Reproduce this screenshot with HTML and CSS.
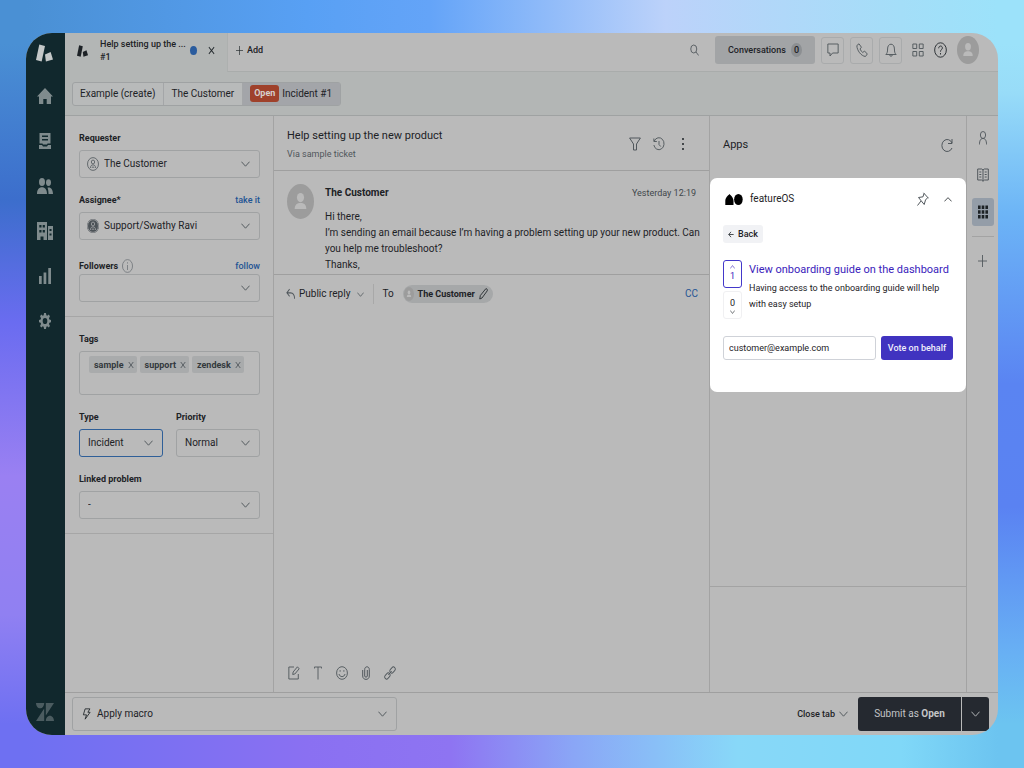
FILE: index.html
```html
<!DOCTYPE html>
<html lang="en">
<head>
<meta charset="UTF-8">
<meta name="viewport" content="width=device-width, initial-scale=1.0">
<title>Help setting up the new product</title>
<link rel="stylesheet" href="styles.css">
</head>
<body>
<svg class="sprite" aria-hidden="true">
    <symbol id="chevron" viewBox="0 0 10 6" preserveAspectRatio="none"><path d="M.5.7 5 5.2 9.5.7"/></symbol>
    <symbol id="logo" viewBox="0 0 18 18" preserveAspectRatio="none"><path d="M3.500.5 9.500 2 6 17.500 0 16z"/><path d="M9.500 10.500 15.500 8l2.500 7.500-7.500 2z"/></symbol>
    <symbol id="home" viewBox="0 0 16 16" preserveAspectRatio="none"><path d="M8 0l8 8.500h-2V16H9.700v-5H6.300v5H2V8.500H0z"/></symbol>
    <symbol id="views" viewBox="0 0 12 16" preserveAspectRatio="none"><path fill-rule="evenodd" d="M.5 0h11v10.500H8.500l-.5 1H4l-.5-1h-3zM3 2.500V4h6V2.500zM3 6v1.500h6V6zM0 12h3l1 1.500h4l1-1.500h3v4H0z"/></symbol>
    <symbol id="people" viewBox="0 0 16 14" preserveAspectRatio="none"><ellipse cx="5" cy="3.500" rx="3" ry="3.500"/><ellipse cx="11.500" cy="4" rx="2.500" ry="3"/><path d="M0 14c0-4 2-6 5-6s5 2 5 6zM10.500 8.500c3-1 5.500 1.500 5.500 5.500h-4.500c0-2.500-.3-4-1-5.500z"/></symbol>
    <symbol id="building" viewBox="0 0 16 18" preserveAspectRatio="none"><path fill-rule="evenodd" d="M0 0h10v18H6.500v-3.500h-3V18H0zM2.300 3v2.500H4.500V3zm3.400 0v2.500h2.200V3zM2.300 8v2.500h2.200V8zm3.400 0v2.500h2.200V8zM11 4h5v14h-5zm1.500 3v2h2V7zm0 4.500v2h2v-2z"/></symbol>
    <symbol id="bars" viewBox="0 0 11 14" preserveAspectRatio="none"><path d="M0 7h2.500v7H0zM4.200 4h2.500v10H4.200zM8.500 0H11v14H8.500z"/></symbol>
    <symbol id="gear" viewBox="0 0 16 16" preserveAspectRatio="none"><path fill-rule="evenodd" d="M6.700 0h2.600l.5 2.300 1.200.5 2-1.300 1.600 1.700-1.300 2 .5 1.300 2.200.4v2.300l-2.200.5-.5 1.200 1.300 2-1.700 1.700-1.900-1.300-1.200.5-.5 2.200H6.700l-.5-2.200-1.200-.5-2 1.300-1.600-1.700 1.300-2-.5-1.200L0 9.200V6.900l2.200-.4.5-1.300-1.300-2L3 1.500l2 1.300 1.200-.5zM8 4.900a3.100 3.100 0 100 6.200 3.100 3.100 0 000-6.200z"/></symbol>
    <symbol id="zendesk" viewBox="0 0 18 18" preserveAspectRatio="none"><path d="M0 0h8.200c0 3-1.800 5.300-4.100 5.300S0 3 0 0zM8.200 5.500V18H0zM9.800 0H18L9.800 12.500zM9.800 18c0-3 1.800-5.300 4.100-5.300S18 15 18 18z"/></symbol>
    <symbol id="close" viewBox="0 0 8 8" preserveAspectRatio="none"><path d="M1 1l6 6M7 1L1 7"/></symbol>
    <symbol id="plus" viewBox="0 0 12 12" preserveAspectRatio="none"><path d="M6 0v12M0 6h12"/></symbol>
    <symbol id="search" viewBox="0 0 12 12" preserveAspectRatio="none"><circle cx="5" cy="5" r="4"/><path d="M8 8l3.500 3.500"/></symbol>
    <symbol id="chat" viewBox="0 0 14 14" preserveAspectRatio="none"><path d="M1 1h12v9H6.500L3.500 13v-3H1z"/></symbol>
    <symbol id="phone" viewBox="0 0 14 14" preserveAspectRatio="none"><path d="M3.500.8L1 2.500c0 5 5 10.500 10 11l2.200-2.500-3.300-3-2 1.500C6.500 8.700 5.300 7.300 4.700 6l1.600-1.800z"/></symbol>
    <symbol id="bell" viewBox="0 0 14 14" preserveAspectRatio="none"><path d="M1 11.500c1.500-1.200 2-2.500 2-5.500 0-3 1.700-4.800 4-4.800S11 3 11 6c0 3 .5 4.300 2 5.500zM5.500 12c.3 1.800 2.700 1.800 3 0"/></symbol>
    <symbol id="tiles" viewBox="0 0 14 14" preserveAspectRatio="none"><path d="M1 1h4.500v4.500H1zM8.500 1H13v4.500H8.500zM1 8.500h4.500V13H1zM8.500 8.500H13V13H8.500z"/></symbol>
    <symbol id="help" viewBox="0 0 16 16" preserveAspectRatio="none"><circle cx="8" cy="8" r="7.200"/><path d="M5.800 6.300c0-3 4.500-3 4.500-.3C10.300 7.600 8 7.600 8 9.700M8 11v1.500"/></symbol>
    <symbol id="avatar" viewBox="0 0 28 28" preserveAspectRatio="none"><circle cx="14" cy="14" r="14"/><circle class="figure" cx="14" cy="10.800" r="3.700"/><path class="figure" d="M8 20c0-3.500 2.500-4.800 6-4.800s6 1.300 6 4.800z"/></symbol>
    <symbol id="person" viewBox="0 0 16 16" preserveAspectRatio="none"><circle cx="8" cy="8" r="7.300"/><circle cx="8" cy="5.700" r="2.200"/><path d="M4.500 12.500c.3-2.500 1.500-3.500 3.500-3.500s3.200 1 3.500 3.500M6.500 12.500L8 11l1.500 1.500"/></symbol>
    <symbol id="info" viewBox="0 0 14 14" preserveAspectRatio="none"><circle cx="7" cy="7" r="6.400"/><path d="M7 6v5M7 3.300v1.200"/></symbol>
    <symbol id="filter" viewBox="0 0 12 14" preserveAspectRatio="none"><path d="M.6 1h10.800L7.500 7v6h-3V7z"/></symbol>
    <symbol id="history" viewBox="0 0 14 14" preserveAspectRatio="none"><path d="M1.500 4A6 6 0 111 8M1 1.500V4.500h3.500M7 4v3.500L9 9.500"/></symbol>
    <symbol id="dots" viewBox="0 0 4 14"><circle cx="2" cy="2" r="1"/><circle cx="2" cy="7" r="1"/><circle cx="2" cy="12" r="1"/></symbol>
    <symbol id="reply" viewBox="0 0 10 10" preserveAspectRatio="none"><path d="M4 1L1 4l3 3M1 4h4c3 0 4.500 2 4.500 5"/></symbol>
    <symbol id="pencil" viewBox="0 0 12 12" preserveAspectRatio="none"><path d="M1 11l.8-3.500L9 .8c1.500-.5 2.500.8 2 2L4 10z"/></symbol>
    <symbol id="compose" viewBox="0 0 14 14" preserveAspectRatio="none"><path d="M7 1H1v12h11V8M5.500 8.500l.5-2.500L11 .8l2 2-5 5.200z"/></symbol>
    <symbol id="text" viewBox="0 0 10 14" preserveAspectRatio="none"><path d="M.5 2.500V1h9v1.500M5 1v12.500"/></symbol>
    <symbol id="smile" viewBox="0 0 14 14" preserveAspectRatio="none"><circle cx="7" cy="7" r="6.300"/><path d="M3.500 8c.8 3.500 6.200 3.500 7 0M4.800 4.200v1.500M9.200 4.200v1.500"/></symbol>
    <symbol id="clip" viewBox="0 0 8 14" preserveAspectRatio="none"><path d="M5.300 4v6c0 1.500-2.600 1.500-2.600 0V3.500c0-3.600 4.600-3.600 4.600 0V10c0 4.500-6.600 4.500-6.600 0V4"/></symbol>
    <symbol id="link" viewBox="0 0 14 14" preserveAspectRatio="none"><rect x="-3.500" y="-2.200" width="7" height="4.400" rx="2.200" transform="translate(10 4) rotate(-45)"/><rect x="-3.500" y="-2.200" width="7" height="4.400" rx="2.200" transform="translate(4 10) rotate(-45)"/><path d="M5 9l4-4"/></symbol>
    <symbol id="refresh" viewBox="0 0 12 14" preserveAspectRatio="none"><path d="M11 1v4.500H7M11 5A5.300 6 0 1011 10"/></symbol>
    <symbol id="user" viewBox="0 0 10 14" preserveAspectRatio="none"><ellipse cx="5" cy="4" rx="3.300" ry="3.500"/><path d="M.5 13.500C.7 9.500 2 7.500 5 7.500s4.300 2 4.500 6"/></symbol>
    <symbol id="book" viewBox="0 0 12 14" preserveAspectRatio="none"><path d="M.7 1h4L6 2l1.300-1h4v11H7.500L6 13.300 4.500 12H.7zM6 2v11M2.300 4h2M2.300 6.500h2M2.300 9h2M7.700 4h2M7.700 6.500h2M7.700 9h2"/></symbol>
    <symbol id="apps" viewBox="0 0 12 14" preserveAspectRatio="none"><path d="M1 .5h2.600v3.400H1zM4.700.5h2.600v3.400H4.700zM8.400.5H11v3.400H8.400zM1 5.300h2.600v3.400H1zM4.700 5.300h2.600v3.400H4.700zM8.400 5.300H11v3.400H8.400zM1 10.100h2.600v3.400H1zM4.700 10.100h2.600v3.400H4.700zM8.400 10.100H11v3.400H8.400z"/></symbol>
    <symbol id="pin" viewBox="0 0 12 14" preserveAspectRatio="none"><path d="M6.500.8l5 5.500M7 1.500L6 4.800 1.500 5.500l5.700 7L8.500 8l2.300-2.500M4 9l-3.500 4.500"/></symbol>
    <symbol id="bolt" viewBox="0 0 10 14" preserveAspectRatio="none"><path d="M3.500 1h5.300L6.500 5H9l-5.500 8L5 8H1.500z"/></symbol>
    <symbol id="featureos" viewBox="0 0 18 11" preserveAspectRatio="none"><path d="M4.500 0c1.500 1.800 4 3.500 4 7v4H.3V7C.3 3.500 3 1.800 4.500 0z"/><ellipse cx="13.400" cy="5.500" rx="4.300" ry="5.500"/></symbol>
    <symbol id="back" viewBox="0 0 8 8" preserveAspectRatio="none"><path d="M7.500 4H1M4 1L1 4l3 3"/></symbol>
</svg>

<div class="window">
    <nav class="sidebar">
        <a href="#" class="brand" aria-label="Agent workspace"><svg class="solid logo"><use href="#logo"/></svg></a>
        <a href="#" aria-label="Home"><svg class="solid nav-icon"><use href="#home"/></svg></a>
        <a href="#" aria-label="Views"><svg class="solid nav-icon small"><use href="#views"/></svg></a>
        <a href="#" aria-label="Customers"><svg class="solid nav-icon"><use href="#people"/></svg></a>
        <a href="#" aria-label="Organizations"><svg class="solid nav-icon tall"><use href="#building"/></svg></a>
        <a href="#" aria-label="Reporting"><svg class="solid nav-icon small"><use href="#bars"/></svg></a>
        <a href="#" aria-label="Admin"><svg class="solid nav-icon small"><use href="#gear"/></svg></a>
        <svg class="solid zendesk"><use href="#zendesk"/></svg>
    </nav>

    <div class="workspace">
        <header class="topbar">
            <div class="tab">
                <svg class="solid tab-logo"><use href="#logo"/></svg>
                <div class="tab-title">Help setting up the ...<br>#1</div>
                <span class="dot"></span>
                <button class="plain" aria-label="Close"><svg class="line dark tiny"><use href="#close"/></svg></button>
            </div>
            <div class="top-tools">
                <button class="plain add"><svg class="line dark tiny"><use href="#plus"/></svg>Add</button>
                <button class="plain search" aria-label="Search"><svg class="line small-icon"><use href="#search"/></svg></button>
                <button class="conversations">Conversations <span class="count">0</span></button>
                <button class="boxed" aria-label="Chat"><svg class="line icon"><use href="#chat"/></svg></button>
                <button class="boxed" aria-label="Phone"><svg class="line icon"><use href="#phone"/></svg></button>
                <button class="boxed" aria-label="Notifications"><svg class="line icon"><use href="#bell"/></svg></button>
                <button class="plain products" aria-label="Products"><svg class="line icon"><use href="#tiles"/></svg></button>
                <button class="plain" aria-label="Help"><svg class="line dark help"><use href="#help"/></svg></button>
                <button class="plain" aria-label="Profile"><svg class="avatar profile"><use href="#avatar"/></svg></button>
            </div>
        </header>

        <div class="crumb-bar">
            <nav class="crumbs">
                <a href="#">Example (create)</a>
                <a href="#">The Customer</a>
                <a href="#" class="current"><span class="badge">Open</span>Incident #1</a>
            </nav>
        </div>

        <main class="main">
            <form class="properties">
                <section>
                    <div class="field">
                        <div class="label-row"><label for="requester">Requester</label></div>
                        <div class="select with-icon">
                            <select id="requester"><option>The Customer</option></select>
                            <svg class="line person"><use href="#person"/></svg>
                            <svg class="line chevron"><use href="#chevron"/></svg>
                        </div>
                    </div>
                    <div class="field">
                        <div class="label-row"><label for="assignee">Assignee*</label><a href="#">take it</a></div>
                        <div class="select with-icon">
                            <select id="assignee"><option>Support/Swathy Ravi</option></select>
                            <svg class="line person filled"><use href="#person"/></svg>
                            <svg class="line chevron"><use href="#chevron"/></svg>
                        </div>
                    </div>
                    <div class="field followers">
                        <div class="label-row"><label for="followers">Followers</label><svg class="line info"><use href="#info"/></svg><a href="#">follow</a></div>
                        <div class="select">
                            <select id="followers"><option></option></select>
                            <svg class="line chevron"><use href="#chevron"/></svg>
                        </div>
                    </div>
                </section>
                <section>
                    <div class="field">
                        <div class="label-row"><span>Tags</span></div>
                        <div class="tags">
                            <span class="tag">sample<svg class="line"><use href="#close"/></svg></span>
                            <span class="tag">support<svg class="line"><use href="#close"/></svg></span>
                            <span class="tag">zendesk<svg class="line"><use href="#close"/></svg></span>
                        </div>
                    </div>
                    <div class="pair">
                        <div class="field">
                            <div class="label-row"><label for="type">Type</label></div>
                            <div class="select focused">
                                <select id="type"><option>Incident</option></select>
                                <svg class="line chevron"><use href="#chevron"/></svg>
                            </div>
                        </div>
                        <div class="field">
                            <div class="label-row"><label for="priority">Priority</label></div>
                            <div class="select">
                                <select id="priority"><option>Normal</option></select>
                                <svg class="line chevron"><use href="#chevron"/></svg>
                            </div>
                        </div>
                    </div>
                    <div class="field">
                        <div class="label-row"><label for="linked">Linked problem</label></div>
                        <div class="select">
                            <select id="linked"><option>-</option></select>
                            <svg class="line chevron"><use href="#chevron"/></svg>
                        </div>
                    </div>
                </section>
            </form>

            <section class="conversation">
                <div class="ticket-head">
                    <div class="ticket-title">
                        <h1>Help setting up the new product</h1>
                        <p>Via sample ticket</p>
                    </div>
                    <button class="plain" aria-label="Filter"><svg class="line icon"><use href="#filter"/></svg></button>
                    <button class="plain" aria-label="History"><svg class="line icon"><use href="#history"/></svg></button>
                    <button class="plain" aria-label="More"><svg class="solid icon"><use href="#dots"/></svg></button>
                </div>
                <article class="message">
                    <svg class="avatar"><use href="#avatar"/></svg>
                    <div class="message-body">
                        <div class="message-head"><strong>The Customer</strong><time>Yesterday 12:19</time></div>
                        <p>Hi there,<br>I’m sending an email because I’m having a problem setting up your new product. Can you help me troubleshoot?<br>Thanks,</p>
                    </div>
                </article>
                <div class="reply">
                    <button class="plain reply-type"><svg class="line small-icon"><use href="#reply"/></svg>Public reply<svg class="line reply-chevron"><use href="#chevron"/></svg></button>
                    <span class="to">To</span>
                    <span class="recipient"><svg class="avatar"><use href="#avatar"/></svg>The Customer<svg class="line dark small-icon"><use href="#pencil"/></svg></span>
                    <a href="#">CC</a>
                </div>
                <div class="editor-tools">
                    <button class="plain" aria-label="Compose"><svg class="line icon"><use href="#compose"/></svg></button>
                    <button class="plain" aria-label="Text"><svg class="line icon narrow"><use href="#text"/></svg></button>
                    <button class="plain" aria-label="Emoji"><svg class="line icon"><use href="#smile"/></svg></button>
                    <button class="plain" aria-label="Attach"><svg class="line icon narrow"><use href="#clip"/></svg></button>
                    <button class="plain" aria-label="Link"><svg class="line icon"><use href="#link"/></svg></button>
                </div>
            </section>

            <aside class="apps">
                <div class="apps-head">
                    <h2>Apps</h2>
                    <button class="plain" aria-label="Refresh"><svg class="line icon"><use href="#refresh"/></svg></button>
                </div>
                <div class="card">
                    <div class="card-head">
                        <svg class="solid feature-logo"><use href="#featureos"/></svg>
                        <span>featureOS</span>
                        <button class="plain" aria-label="Pin"><svg class="line icon"><use href="#pin"/></svg></button>
                        <button class="plain" aria-label="Collapse"><svg class="line dark up"><use href="#chevron"/></svg></button>
                    </div>
                    <button class="back"><svg class="line dark"><use href="#back"/></svg>Back</button>
                    <div class="post">
                        <div class="votes">
                            <button class="vote voted"><svg class="line up"><use href="#chevron"/></svg>1</button>
                            <button class="vote">0<svg class="line dark"><use href="#chevron"/></svg></button>
                        </div>
                        <div>
                            <a href="#">View onboarding guide on the dashboard</a>
                            <p>Having access to the onboarding guide will help with easy setup</p>
                        </div>
                    </div>
                    <div class="behalf">
                        <input type="email" value="customer@example.com" aria-label="Customer email">
                        <button>Vote on behalf</button>
                    </div>
                </div>
                <div class="apps-foot"></div>
            </aside>

            <nav class="rail">
                <button class="plain" aria-label="User"><svg class="line icon narrow"><use href="#user"/></svg></button>
                <button class="plain" aria-label="Knowledge"><svg class="line icon"><use href="#book"/></svg></button>
                <button class="plain active" aria-label="Apps"><svg class="solid icon"><use href="#apps"/></svg></button>
                <hr>
                <button class="plain" aria-label="Add app"><svg class="line small-icon"><use href="#plus"/></svg></button>
            </nav>
        </main>

        <footer class="footer">
            <button class="macro"><svg class="line dark small-icon"><use href="#bolt"/></svg><span>Apply macro</span><svg class="line chevron"><use href="#chevron"/></svg></button>
            <button class="plain close-tab">Close tab<svg class="line chevron"><use href="#chevron"/></svg></button>
            <div class="submit">
                <button>Submit as <b>Open</b></button>
                <button aria-label="Submit options"><svg class="line chevron"><use href="#chevron"/></svg></button>
            </div>
        </footer>
    </div>
</div>
</body>
</html>
```

FILE: styles.css
```css
* {
    box-sizing: border-box;
}
body {
    margin: 0;
    min-height: 100vh;
    padding: 33px 26px;
    display: flex;
    font-family: Roboto, Arial, sans-serif;
    font-size: 10px;
    line-height: 16px;
    color: #1d2226;
    background:
        linear-gradient(to right, #4a90d4 26px, #58a0f4 30%, #64a4f8 42%, #bcd2fa 65%, #a4def8 88%, #9ce2fa calc(100% - 26px)) top / 100% 44px no-repeat,
        linear-gradient(to right, #6e70f2 26px, #8a70f2 30%, #8e74f2 44%, #8aa6f6 56%, #88d8f8 72%, #80d8f8 88%, #6cc4f0 calc(100% - 26px)) bottom / 100% 44px no-repeat,
        linear-gradient(#4a90d4 44px, #3c6ecc 26%, #6a6cf0 42%, #9a80f2 62%, #9080f2 80%, #6e70f2 calc(100% - 44px)) left / 50% 100% no-repeat,
        linear-gradient(#9ce2fa 44px, #98dcf8 12%, #6cb4f6 28%, #5a84f2 50%, #5a82f2 66%, #68b0f4 85%, #6cc4f0 calc(100% - 44px)) right / 50% 100% no-repeat;
}
h1, h2, p {
    margin: 0;
    font-weight: normal;
}
a {
    color: #1f5494;
    text-decoration: none;
}
button, input, select {
    font: inherit;
    color: inherit;
}
button {
    padding: 0;
    cursor: pointer;
}
.plain {
    display: flex;
    align-items: center;
    border: none;
    background: none;
}
.sprite {
    position: absolute;
    width: 0;
    height: 0;
}

/* icons */
.line {
    fill: none;
    stroke: #50575c;
    flex: none;
}
.line.dark {
    stroke: #22282c;
}
.solid {
    fill: currentColor;
    flex: none;
}
.icon {
    width: 12px;
    height: 14px;
}
.icon.narrow {
    width: 8px;
}
.small-icon {
    width: 9px;
    height: 12px;
}
.tiny {
    width: 7px;
    height: 9px;
}
.chevron {
    width: 9px;
    height: 6px;
}
.up {
    transform: rotate(180deg);
}
.avatar {
    width: 27px;
    height: 35px;
    flex: none;
    fill: #9c9c9c;
}
.figure {
    fill: #bababa;
}

/* window */
.window {
    flex: 1;
    display: flex;
    border-radius: 26px;
    overflow: hidden;
    background: #bababa;
}
.sidebar {
    width: 39px;
    padding-right: 2px;
    background: #11282d;
    color: #7f8b8d;
    display: flex;
    flex-direction: column;
    align-items: center;
}
.sidebar a {
    height: 45px;
    display: flex;
    align-items: center;
    color: inherit;
}
.sidebar .brand {
    height: 40px;
    color: #c4c8c8;
}
.logo {
    width: 17px;
    height: 18px;
}
.nav-icon {
    width: 16px;
    height: 16px;
}
.nav-icon.small {
    width: 12px;
}
.nav-icon.tall {
    height: 18px;
}
.zendesk {
    width: 18px;
    height: 18px;
    margin: auto 0 14px;
    color: #4b5c60;
}
.workspace {
    flex: 1;
    min-width: 0;
    display: flex;
    flex-direction: column;
}

/* top bar */
.topbar {
    height: 39px;
    display: flex;
    font-size: 9px;
}
.tab {
    width: 162px;
    padding: 0 12px 4px;
    display: flex;
    align-items: center;
    background: #b3b6b5;
}
.tab-logo {
    width: 11px;
    height: 12px;
}
.tab-title {
    flex: 1;
    padding-left: 12px;
    line-height: 13px;
    font-weight: 500;
    white-space: nowrap;
}
.dot {
    width: 7px;
    height: 9px;
    flex: none;
    border-radius: 50%;
    margin-right: 11px;
    background: #2a5c9e;
}
.top-tools {
    flex: 1;
    padding: 0 19px 4px 8px;
    display: flex;
    align-items: center;
    gap: 6px;
    border-left: 1px solid #adb0af;
    border-bottom: 1px solid #a9acab;
}
.add {
    gap: 4px;
    font-weight: 500;
}
.search {
    margin: 0 10px 0 auto;
}
.conversations {
    width: 100px;
    height: 28px;
    border: none;
    border-radius: 3px;
    font-weight: 500;
    background: #a2a4a6;
}
.count {
    display: inline-block;
    width: 11px;
    margin-left: 3px;
    border-radius: 50%;
    line-height: 14px;
    background: #8c8f92;
}
.boxed {
    width: 23px;
    height: 27px;
    display: flex;
    align-items: center;
    justify-content: center;
    border: 1px solid #a9abac;
    border-radius: 3px;
    background: none;
}
.products {
    margin-left: 4px;
}
.help {
    width: 13px;
    height: 16px;
    margin: 0 4px;
}
.profile {
    width: 22px;
    height: 28px;
}

/* breadcrumbs */
.crumb-bar {
    height: 44px;
    padding: 0 7px;
    display: flex;
    align-items: center;
    background: #b3b6b5;
    border-bottom: 1px solid #9fa2a2;
}
.crumbs {
    display: flex;
    border: 1px solid #9fa2a3;
    border-radius: 3px;
    background: #b8baba;
}
.crumbs a {
    height: 22px;
    padding: 0 8px 0 7px;
    display: flex;
    align-items: center;
    color: inherit;
}
.crumbs a + a {
    border-left: 1px solid #a4a6a8;
}
.crumbs .current {
    background: #a3a5a9;
}
.badge {
    width: 29px;
    margin-right: 3px;
    border-radius: 3px;
    line-height: 17px;
    font-size: 9px;
    font-weight: bold;
    text-align: center;
    color: #d6cfcc;
    background: #9f412b;
}

/* columns */
.main {
    flex: 1;
    display: grid;
    grid-template-columns: 208px 1fr 257px 31px;
}
.properties section {
    padding: 14px 13px 14px 14px;
    border-bottom: 1px solid #a6a6a6;
}
.field + .field,
.pair, .pair + .field {
    margin-top: 14px;
}
.pair .field + .field {
    margin-top: 0;
}
.field.followers {
    margin-top: 17px;
}
.label-row {
    height: 20px;
    padding-bottom: 4px;
    display: flex;
    align-items: center;
    font-size: 9px;
    font-weight: bold;
}
.followers .label-row {
    height: 17px;
    padding-bottom: 0;
}
.label-row a {
    margin-left: auto;
    font-weight: 500;
}
.info {
    width: 11px;
    height: 14px;
    margin-left: 4px;
    stroke: #767b7f;
}
.select {
    display: grid;
    align-items: center;
}
.select > * {
    grid-area: 1 / 1;
    pointer-events: none;
}
.select select {
    appearance: none;
    width: 100%;
    height: 28px;
    padding: 0 8px;
    border: 1px solid #a0a2a3;
    border-radius: 3px;
    background: none;
    pointer-events: auto;
}
.select.with-icon select {
    padding-left: 24px;
}
.select.focused select {
    border-color: #2f5f98;
}
.select .chevron {
    justify-self: end;
    margin-right: 10px;
}
.person {
    width: 12px;
    height: 14px;
    margin-left: 8px;
}
.person.filled {
    border-radius: 50%;
    background: #4d5358;
    stroke: #a6a8aa;
}
.tags {
    height: 44px;
    padding: 4px 9px;
    display: flex;
    gap: 3px;
    border: 1px solid #a0a2a3;
    border-radius: 3px;
}
.tag {
    height: 17px;
    padding: 0 3px 0 5px;
    display: flex;
    align-items: center;
    gap: 4px;
    border-radius: 2px;
    font-size: 9px;
    font-weight: bold;
    color: #33393d;
    background: #a9abac;
}
.tag svg {
    width: 6px;
    height: 8px;
}
.pair {
    display: grid;
    grid-template-columns: 1fr 1fr;
    gap: 13px;
}

/* conversation */
.conversation {
    display: flex;
    flex-direction: column;
    border: solid #a3a3a3;
    border-width: 0 1px;
}
.ticket-head {
    height: 55px;
    padding: 2px 20px 0 13px;
    display: flex;
    align-items: center;
    gap: 12px;
    border-bottom: 1px solid #9f9f9f;
}
.ticket-title {
    flex: 1;
}
.ticket-title h1 {
    font-size: 11px;
    line-height: 20px;
}
.ticket-title p {
    font-size: 9px;
    color: #50565a;
}
.message {
    height: 104px;
    padding: 13px 6px 0 13px;
    display: flex;
    gap: 11px;
    border-bottom: 1px solid #9f9f9f;
}
.message-body {
    flex: 1;
}
.message-head {
    margin: 1px 7px 8px 0;
    display: flex;
    justify-content: space-between;
}
.message-head time {
    font-size: 9px;
    color: #41474b;
}
.reply {
    height: 38px;
    padding: 0 11px 0 12px;
    display: flex;
    align-items: center;
}
.reply-type {
    gap: 4px;
}
.reply-chevron {
    width: 7px;
    height: 5px;
    margin: 0 9px 0 3px;
}
.to {
    padding-left: 8px;
    border-left: 1px solid #a8a8a8;
    line-height: 20px;
}
.recipient {
    height: 18px;
    margin-left: 9px;
    padding: 0 5px 0 1px;
    display: flex;
    align-items: center;
    gap: 4px;
    border-radius: 9px;
    font-size: 9px;
    font-weight: bold;
    background: #a6a8a9;
}
.recipient .avatar {
    width: 10px;
    height: 14px;
}
.reply a {
    margin-left: auto;
}
.editor-tools {
    margin-top: auto;
    padding: 12px 14px;
    display: flex;
    gap: 12px;
}
.editor-tools button {
    width: 12px;
    justify-content: center;
}

/* apps */
.apps {
    display: flex;
    flex-direction: column;
    border-right: 1px solid #a3a3a3;
}
.apps-head {
    height: 62px;
    padding: 0 13px 4px;
    display: flex;
    align-items: center;
    justify-content: space-between;
}
.apps-head h2 {
    font-size: 11px;
}
.card {
    height: 214px;
    padding: 9px 13px;
    border-radius: 7px;
    background: #fff;
}
.card-head {
    height: 24px;
    display: flex;
    align-items: center;
    gap: 7px;
}
.card-head span {
    margin-right: auto;
}
.card-head button + button {
    margin: 0 1px 0 8px;
}
.feature-logo {
    width: 18px;
    height: 11px;
    margin-left: 2px;
    color: #000;
}
.card .up {
    width: 8px;
    height: 5px;
}
.back {
    height: 18px;
    margin-top: 14px;
    padding: 0 5px;
    display: flex;
    align-items: center;
    gap: 4px;
    border: none;
    border-radius: 3px;
    font-size: 9px;
    font-weight: 500;
    background: #f1f2f5;
}
.back svg {
    width: 6px;
    height: 7px;
}
.post {
    margin-top: 17px;
    display: flex;
    gap: 7px;
}
.post a {
    font-size: 11px;
    line-height: 20px;
    color: #3a22bb;
}
.post p {
    font-size: 9px;
}
.votes {
    display: flex;
    flex-direction: column;
    gap: 3px;
}
.vote {
    width: 19px;
    height: 28px;
    display: flex;
    flex-direction: column;
    align-items: center;
    justify-content: center;
    border: 1px solid #f0f0f2;
    border-radius: 3px;
    font-size: 9px;
    line-height: 14px;
    background: none;
}
.vote svg,
.card .vote .up {
    width: 5px;
    height: 4px;
}
.vote.voted {
    border-color: #4338ca;
    color: #3a22bb;
}
.vote.voted svg {
    stroke: #3a22bb;
}
.behalf {
    margin-top: 17px;
    display: flex;
    gap: 5px;
}
.behalf input {
    flex: 1;
    min-width: 0;
    height: 24px;
    padding: 0 5px;
    border: 1px solid #cfd2d8;
    border-radius: 3px;
    font-size: 9px;
}
.behalf button {
    width: 72px;
    border: none;
    border-radius: 3px;
    font-size: 9px;
    font-weight: 500;
    color: #f0eefc;
    background: #4033c0;
}
.apps-foot {
    height: 106px;
    margin-top: auto;
    border-top: 1px solid #a3a3a3;
}

/* rail */
.rail {
    padding-top: 8px;
    display: flex;
    flex-direction: column;
    align-items: center;
    gap: 9px;
}
.rail button {
    width: 22px;
    height: 28px;
    justify-content: center;
}
.rail .active {
    border-radius: 3px;
    background: #949da8;
}
.rail hr {
    width: 22px;
    margin: 1px 0;
    border: none;
    border-top: 1px solid #a3a3a3;
}

/* footer */
.footer {
    height: 43px;
    padding: 0 9px 0 7px;
    display: flex;
    align-items: center;
    border-top: 1px solid #9f9f9f;
}
.macro {
    width: 325px;
    height: 34px;
    padding: 0 9px;
    display: flex;
    align-items: center;
    gap: 6px;
    border: 1px solid #a0a2a3;
    border-radius: 3px;
    background: none;
}
.macro .chevron {
    margin-left: auto;
}
.close-tab {
    margin: 0 10px 0 auto;
    gap: 4px;
    font-size: 9px;
    font-weight: 500;
}
.submit {
    height: 34px;
    display: flex;
    gap: 1px;
}
.submit button {
    width: 103px;
    border: none;
    border-radius: 3px 0 0 3px;
    color: #c3c5c7;
    background: #252930;
}
.submit button + button {
    width: 27px;
    border-radius: 0 3px 3px 0;
}
.submit .chevron {
    stroke: #b5b8ba;
}
```
